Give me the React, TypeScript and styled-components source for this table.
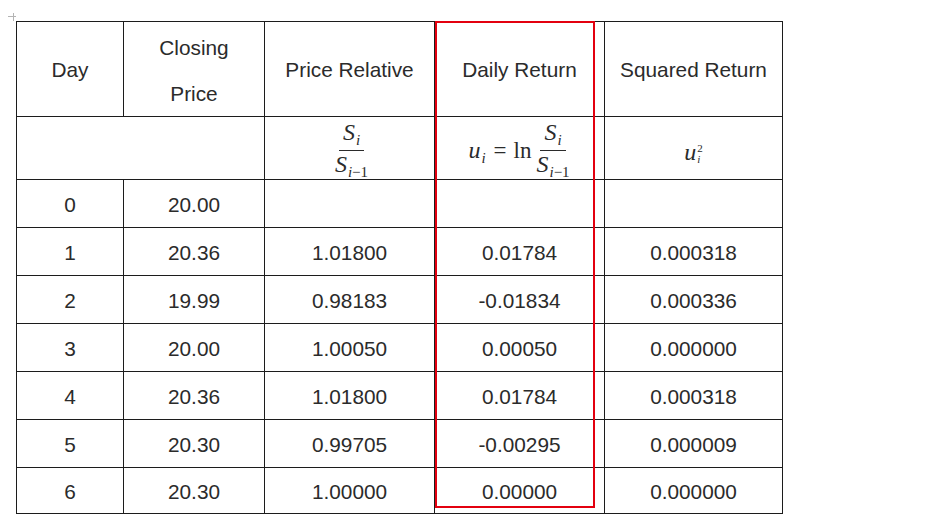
import React from 'react';
import styled, { createGlobalStyle } from 'styled-components';

const GlobalStyle = createGlobalStyle`
  html, body {
    margin: 0;
    padding: 0;
    background: #fff;
  }
  * {
    box-sizing: border-box;
  }
`;

interface DayRow {
  day: number;
  close: string;
  relative?: string;
  ret?: string;
  squared?: string;
}

const rows: DayRow[] = [
  { day: 0, close: '20.00' },
  { day: 1, close: '20.36', relative: '1.01800', ret: '0.01784', squared: '0.000318' },
  { day: 2, close: '19.99', relative: '0.98183', ret: '-0.01834', squared: '0.000336' },
  { day: 3, close: '20.00', relative: '1.00050', ret: '0.00050', squared: '0.000000' },
  { day: 4, close: '20.36', relative: '1.01800', ret: '0.01784', squared: '0.000318' },
  { day: 5, close: '20.30', relative: '0.99705', ret: '-0.00295', squared: '0.000009' },
  { day: 6, close: '20.30', relative: '1.00000', ret: '0.00000', squared: '0.000000' },
];

const SiFraction = () => (
  <Frac>
    <Numerator>
      <MathVar>S</MathVar>
      <Sub>i</Sub>
    </Numerator>
    <Denominator>
      <MathVar>S</MathVar>
      <Sub>
        i<Upright>−1</Upright>
      </Sub>
    </Denominator>
  </Frac>
);

export default function App() {
  return (
    <Page>
      <GlobalStyle />
      <TableWrap>
        <CornerMark width="8" height="8" viewBox="0 0 8 8">
          <line x1="0" y1="3.5" x2="8" y2="3.5" stroke="#b4b4b4" strokeWidth="1" />
          <line x1="5.5" y1="0" x2="5.5" y2="8" stroke="#b4b4b4" strokeWidth="1" />
        </CornerMark>

        <Grid>
          <Cell>Day</Cell>
          <Cell $lineHeight={46}>
            Closing
            <br />
            Price
          </Cell>
          <Cell>Price Relative</Cell>
          <Cell>Daily Return</Cell>
          <Cell>Squared Return</Cell>

          <Cell $span={2} />
          <Cell>
            <MathLine>
              <SiFraction />
            </MathLine>
          </Cell>
          <Cell>
            <MathLine>
              <MathVar>u</MathVar>
              <Sub>i</Sub>
              <Op>=</Op>
              <Upright>ln</Upright>
              <SiFraction />
            </MathLine>
          </Cell>
          <Cell>
            <MathLine>
              <MathVar>u</MathVar>
              <Scripts>
                <SmallScript>2</SmallScript>
                <SmallScript $italic>i</SmallScript>
              </Scripts>
            </MathLine>
          </Cell>

          {rows.map((r) => (
            <React.Fragment key={r.day}>
              <Cell>{r.day}</Cell>
              <Cell>{r.close}</Cell>
              <Cell>{r.relative ?? ''}</Cell>
              <Cell>{r.ret ?? ''}</Cell>
              <Cell>{r.squared ?? ''}</Cell>
            </React.Fragment>
          ))}
        </Grid>

        {/* highlight box drawn over the Daily Return column */}
        <Highlight />
      </TableWrap>
    </Page>
  );
}

const Page = styled.div`
  padding: 21px 0 0 16px;
  font-family: "Liberation Sans", Arial, sans-serif;
  color: #2b2b2b;
`;

const TableWrap = styled.div`
  position: relative;
  width: max-content;
`;

const CornerMark = styled.svg`
  position: absolute;
  left: -8px;
  top: -8px;
`;

const Grid = styled.div`
  display: grid;
  grid-template-columns: 107px 141px 170px 170px 178px;
  grid-template-rows: 95px 63px repeat(6, 48px) 46px;
  border-left: 1px solid #1c1c1c;
  border-top: 1px solid #1c1c1c;
`;

const Cell = styled.div<{ $span?: number; $lineHeight?: number }>`
  grid-column: span ${(p) => p.$span ?? 1};
  display: flex;
  align-items: center;
  justify-content: center;
  text-align: center;
  padding-top: 3px;
  font-size: 20.8px;
  line-height: ${(p) => (p.$lineHeight ? `${p.$lineHeight}px` : '1.2')};
  border-right: 1px solid #1c1c1c;
  border-bottom: 1px solid #1c1c1c;
`;

const Highlight = styled.div`
  position: absolute;
  left: 419px;
  top: 0;
  width: 160px;
  height: 487px;
  border: 2px solid #e3000f;
  pointer-events: none;
`;

const MathLine = styled.span`
  display: inline-block;
  white-space: nowrap;
  font-family: "Liberation Serif", "DejaVu Serif", serif;
  font-size: 23px;
  line-height: 1;
  color: #2b2b2b;
  padding-top: 6px;
`;

const MathVar = styled.span`
  font-style: italic;
  font-size: 24px;
`;

const Sub = styled.span`
  display: inline-block;
  font-style: italic;
  font-size: 15px;
  vertical-align: -5px;
  margin-left: 1px;
`;

const Upright = styled.span`
  font-style: normal;
`;

const Op = styled.span`
  margin: 0 7px 0 8px;
`;

const Frac = styled.span`
  display: inline-flex;
  flex-direction: column;
  align-items: center;
  vertical-align: middle;
  margin-left: 4px;
  line-height: 1;
`;

const Numerator = styled.span`
  display: block;
  padding: 0 4px 2px;
  border-bottom: 1px solid #2b2b2b;
`;

const Denominator = styled.span`
  display: block;
  padding: 1px 1px 5px;
`;

const Scripts = styled.span`
  display: inline-flex;
  flex-direction: column;
  align-items: flex-start;
  vertical-align: 8px;
  margin-left: 1px;
`;

const SmallScript = styled.span<{ $italic?: boolean }>`
  font-size: 11px;
  line-height: 11px;
  font-style: ${(p) => (p.$italic ? 'italic' : 'normal')};
`;
